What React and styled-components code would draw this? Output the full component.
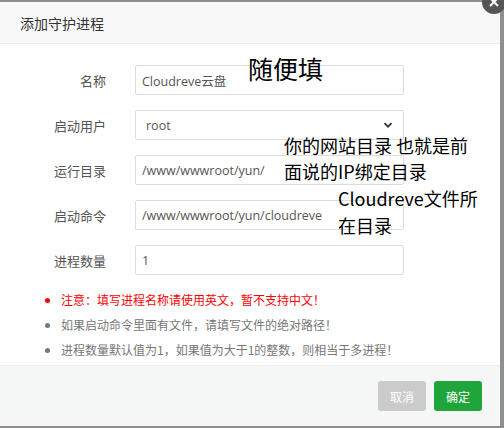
import React from 'react';
import styled, { createGlobalStyle } from 'styled-components';

const GlobalStyle = createGlobalStyle`
  html, body {
    margin: 0;
    padding: 0;
    background: #8f8f8f;
    font-family: 'Noto Sans CJK SC', 'Liberation Sans', sans-serif;
  }
`;

const Shade = styled.div`
  width: 504px;
  height: 428px;
  padding-top: 2px;
  box-sizing: border-box;
  overflow: hidden;
  position: relative;
`;

const Dialog = styled.div`
  width: 500px;
  height: 424px;
  background: #fff;
  display: flex;
  flex-direction: column;
  position: relative;
`;

const Header = styled.div`
  height: 41px;
  background: #f8f8f8;
  border-bottom: 1px solid #eee;
  display: flex;
  align-items: center;
  padding-left: 20px;
  font-size: 14px;
  color: #333;
`;

const Close = styled.div`
  position: absolute;
  right: -6px;
  top: -12px;
  width: 24px;
  height: 24px;
  border-radius: 50%;
  background: #555;
  display: flex;
  align-items: center;
  justify-content: center;
`;

const Body = styled.div`
  flex: 1;
  padding: 21px 0 0 0;
  position: relative;
`;

const Row = styled.div`
  display: flex;
  align-items: center;
  height: 30px;
  margin-bottom: 15px;
`;

const Label = styled.div`
  width: 135px;
  padding-right: 29px;
  text-align: right;
  font-size: 13px;
  color: #555;
  box-sizing: border-box;
`;

const Field = styled.div`
  width: 269px;
  height: 30px;
  box-sizing: border-box;
  border: 1px solid #ddd;
  border-radius: 2px;
  display: flex;
  align-items: center;
  justify-content: space-between;
  padding: 0 ${(p) => (p.$select ? '10px' : '6px')};
  font-size: 12.5px;
  color: #555;
  font-family: 'Open Sans', 'Noto Sans CJK SC', sans-serif;
`;

const Notes = styled.ul`
  margin: -3px 0 0 0;
  padding: 0 0 0 61px;
  list-style: disc;
`;

const Note = styled.li`
  font-size: 12px;
  line-height: 25px;
  color: ${(p) => (p.$warn ? '#f00' : '#777')};
`;

const Footer = styled.div`
  height: 60px;
  background: #f5f6f6;
  border-top: 1px solid #eee;
  display: flex;
  align-items: center;
  justify-content: flex-end;
  gap: 8px;
  padding-right: 18px;
`;

const Button = styled.div`
  width: 48px;
  height: 30px;
  border-radius: 3px;
  background: ${(p) => (p.$primary ? '#20a53a' : '#cbcbcb')};
  color: #fff;
  font-size: 12px;
  display: flex;
  align-items: center;
  justify-content: center;
`;

const Remark = styled.div`
  position: absolute;
  color: #000;
  font-size: ${(p) => p.$size}px;
  line-height: ${(p) => p.$lh}px;
  width: ${(p) => p.$w}px;
  font-family: 'Noto Sans CJK SC', 'Liberation Sans', sans-serif;
  white-space: pre-line;
`;

const Chevron = () => (
  <svg width="10" height="10" viewBox="0 0 10 10">
    <path d="M1.5 3.2 L5 6.7 L8.5 3.2" fill="none" stroke="#333" strokeWidth="1.8" />
  </svg>
);

const fields = [
  { label: '名称', value: 'Cloudreve云盘' },
  { label: '启动用户', value: 'root', select: true },
  { label: '运行目录', value: '/www/wwwroot/yun/' },
  { label: '启动命令', value: '/www/wwwroot/yun/cloudreve' },
  { label: '进程数量', value: '1' },
];

export default function App() {
  return (
    <Shade>
      <GlobalStyle />
      <Dialog>
        <Header>添加守护进程</Header>
        <Body>
          {fields.map((f) => (
            <Row key={f.label}>
              <Label>{f.label}</Label>
              <Field $select={f.select}>
                <span>{f.value}</span>
                {f.select && <Chevron />}
              </Field>
            </Row>
          ))}
          <Notes>
            <Note $warn>注意：填写进程名称请使用英文，暂不支持中文！</Note>
            <Note>如果启动命令里面有文件，请填写文件的绝对路径！</Note>
            <Note>进程数量默认值为1，如果值为大于1的整数，则相当于多进程！</Note>
          </Notes>
          <Remark $size={25} $lh={32} $w={120} style={{ left: 248, top: 8 }}>随便填</Remark>
          <Remark $size={18} $lh={26} $w={210} style={{ left: 284, top: 88 }}>
            {'你的网站目录 也就是前\n面说的IP绑定目录'}
          </Remark>
          <Remark $size={18} $lh={27} $w={170} style={{ left: 338, top: 141 }}>
            {'Cloudreve文件所\n在目录'}
          </Remark>
        </Body>
        <Footer>
          <Button>取消</Button>
          <Button $primary>确定</Button>
        </Footer>
        <Close>
          <svg width="12" height="12" viewBox="0 0 12 12">
            <path d="M2 2 L10 10 M10 2 L2 10" stroke="#fff" strokeWidth="2" />
          </svg>
        </Close>
      </Dialog>
    </Shade>
  );
}
